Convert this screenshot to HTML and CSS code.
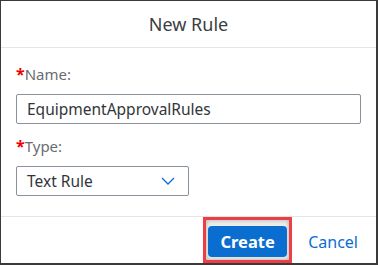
FILE: index.html
```html
<!DOCTYPE html>
<html lang="en">
<head>
  <meta charset="UTF-8" />
  <title>New Rule</title>
  <link rel="stylesheet" href="styles.css">
</head>
<body>
  <div class="dialog">
    <div class="dialog-header">New Rule</div>

    <div class="dialog-content">
      <label class="field-label"><span class="req">*</span>Name:</label>
      <div class="input">EquipmentApprovalRules</div>

      <label class="field-label type-label"><span class="req">*</span>Type:</label>
      <div class="select">
        <span>Text Rule</span>
        <svg class="chevron" width="14" height="8" viewBox="0 0 14 8">
          <path d="M1 1 L7 7 L13 1" fill="none" stroke="#0a6ed1" stroke-width="1.3"/>
        </svg>
      </div>
    </div>

    <div class="dialog-footer">
      <div class="highlight">
        <button class="btn-create">Create</button>
      </div>
      <button class="btn-cancel">Cancel</button>
    </div>
  </div>
</body>
</html>
```

FILE: styles.css
```css
body {
  margin: 0;
  font-family: "Noto Sans", "Open Sans", sans-serif;
}

.dialog {
  width: 378px;
  height: 265px;
  box-sizing: border-box;
  border-style: solid;
  border-color: #3a3a3a;
  border-width: 1px 2px 2px 1px;
  background: #fff;
  display: flex;
  flex-direction: column;
}

.dialog-header {
  height: 46px;
  border-bottom: 1px solid #e5e5e5;
  display: flex;
  align-items: center;
  justify-content: center;
  font-size: 18px;
  color: #3b3e42;
}

.dialog-content {
  flex: 1;
  padding: 15px 15px 0 15px;
}

.field-label {
  display: block;
  font-size: 15px;
  color: #6a6d70;
  height: 22px;
  line-height: 22px;
}

.req {
  color: #e00;
  font-weight: bold;
  font-size: 16px;
}

.type-label {
  margin-top: 11px;
}

.input {
  margin-top: 9px;
  height: 30px;
  box-sizing: border-box;
  border: 1px solid #89919a;
  border-radius: 2px;
  padding: 0 10px;
  font-size: 15.5px;
  line-height: 28px;
  color: #32363a;
}

.select {
  margin-top: 9px;
  width: 173px;
  height: 30px;
  box-sizing: border-box;
  border: 1px solid #89919a;
  border-radius: 2px;
  padding: 0 13px 0 10px;
  display: flex;
  align-items: center;
  justify-content: space-between;
  font-size: 15.5px;
  color: #32363a;
}

.dialog-footer {
  height: 46px;
  border-top: 1px solid #e5e5e5;
  display: flex;
  align-items: flex-end;
  justify-content: flex-end;
  padding-right: 18px;
}

.highlight {
  box-sizing: border-box;
  height: 46px;
  width: 89px;
  border: 3px solid #ee3e45;
  padding: 6px 2px 3px 2px;
  margin-right: 16px;
  background: #ececec;
  box-shadow: inset 0 0 4px #aaa;
}

.btn-create {
  display: block;
  height: 31px;
  width: 79px;
  border: none;
  border-radius: 4px;
  background: #0a6ed1;
  color: #fff;
  font-family: inherit;
  font-weight: bold;
  font-size: 16.5px;
  padding: 0;
}

.btn-cancel {
  border: none;
  background: none;
  color: #0a6ed1;
  font-family: inherit;
  font-size: 16px;
  padding: 0;
  height: 31px;
  margin-bottom: 6px;
}
```
